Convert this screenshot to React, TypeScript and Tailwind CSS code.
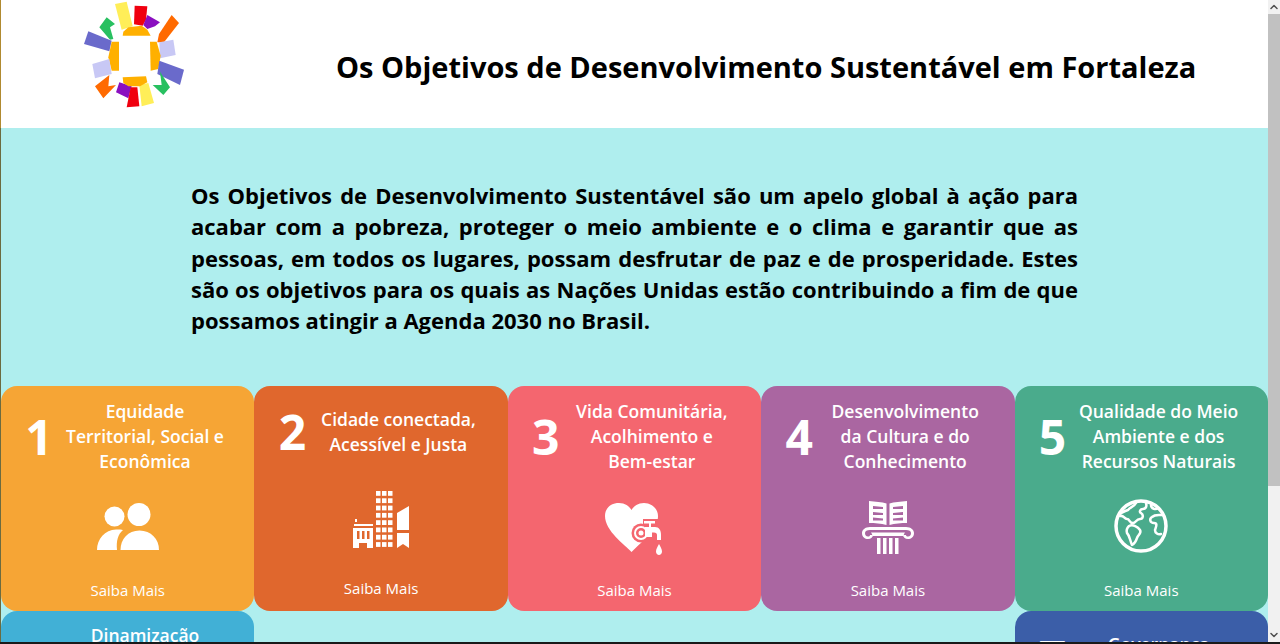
import { ChevronDown, ChevronUp } from 'lucide-react'
import type { ReactNode } from 'react'

function Logo() {
  const shapes: [string, string][] = [
    ['#ffee58', '165,15 200,8 218,82 185,92'],
    ['#f0000f', '224,20 262,22 258,62 248,80 222,76'],
    ['#8a0fc0', '262,48 300,70 285,82 262,90 250,78'],
    ['#ff6a00', '335,48 357,72 312,130 292,130 297,105'],
    ['#28c060', '140,55 165,75 150,85 160,120 150,122 118,85'],
    ['#6a6acb', '85,97 155,125 148,157 72,135'],
    ['#c8c8f5', '298,130 340,122 347,168 300,178'],
    ['#ffb000', '188,110 190,98 205,85 245,80 262,92 272,110'],
    ['#ffb000', '155,128 177,128 177,215 155,215 145,175'],
    ['#ffb000', '270,128 290,128 302,170 295,210 272,215'],
    ['#6a6acb', '298,185 372,212 360,258 292,225'],
    ['#c8c8f5', '97,195 148,180 155,225 105,238'],
    ['#ff6a00', '105,262 148,228 145,262 168,258 130,298'],
    ['#28c060', '300,218 330,265 310,288 278,258 305,258'],
    ['#ffee58', '238,258 265,252 282,312 245,322'],
    ['#8a0fc0', '178,250 215,262 205,298 168,280'],
    ['#f0000f', '212,265 232,265 238,322 200,325'],
    ['#ffb000', '188,235 258,232 262,250 240,262 205,262 190,252'],
  ]
  return (
    <svg viewBox="0 0 450 390" className="w-[150px] h-[130px] shrink-0">
      {shapes.map(([fill, points], i) => (
        <polygon key={i} fill={fill} points={points} />
      ))}
    </svg>
  )
}

function PeopleIcon() {
  return (
    <svg viewBox="0 0 62 47" className="w-[62px] h-[47px]" fill="white">
      <circle cx="17.5" cy="13.5" r="10" />
      <circle cx="42" cy="11.5" r="11.5" />
      <path d="M0 47C0 36 8 27 19 26.500C24 26.300 26 27 26 27C21 31 19 38 20 47Z" />
      <path d="M23.500 47C23.500 36 31 27.500 42.500 27.500C54 27.500 62 36 62 47Z" />
    </svg>
  )
}

function CityIcon() {
  const grid = []
  for (let row = 0; row < 8; row++) {
    for (let col = 0; col < 3; col++) {
      grid.push(<rect key={`${row}-${col}`} x={23 + col * 6} y={row * 7.300} width="4.500" height="4.800" />)
    }
  }
  return (
    <svg viewBox="0 0 57 57" className="w-[57px] h-[57px]" fill="white">
      {grid}
      <rect x="2" y="28" width="2" height="3" />
      <rect x="1" y="33" width="19" height="2" />
      <path fillRule="evenodd" d="M0 37H20V57H14V52H6V57H0ZM4 40V48H6.500V40ZM9 40V48H11.500V40ZM14 40V48H16.500V40Z" />
      <path d="M44 22L56 15V39H44Z" />
      <path d="M44 42H56V57L50 53L44 57Z" />
    </svg>
  )
}

function HeartTapIcon() {
  return (
    <svg viewBox="0 0 58 52" className="w-[58px] h-[52px]" fill="white">
      <path d="M26.500 49C20 42 0 28 0 13C0 5 6 0 14 0C20 0 24 3 26.500 7C29 3 33 0 39 0C47 0 53 6 53 13C53 22 47 30 26.500 49Z" />
      <circle cx="36" cy="30" r="9.500" fill="#f4666f" />
      <rect x="38" y="16" width="18" height="22" fill="#f4666f" />
      <circle cx="36" cy="30" r="6" fill="none" stroke="white" strokeWidth="2" />
      <circle cx="36" cy="30" r="2.500" />
      <path d="M39 18H50V20.500H46V24H50C54 24 56 27 56 32V37H52V32C52 30.500 51 29.500 49 29.500H47V34H40V24H44V20.500H39Z" />
      <path d="M54 41C55.500 44 57 46 57 48.500C57 50.500 55.500 52 54 52C52.500 52 51 50.500 51 48.500C51 46 52.500 44 54 41Z" />
    </svg>
  )
}

function BookColumnIcon() {
  return (
    <svg viewBox="0 0 52 54" className="w-[52px] h-[54px]" fill="white">
      <path fillRule="evenodd" d="M7 1C13 2 20 2 24.500 3.500V25C19 23.500 13 23 7 23ZM11 6V9H21V7ZM11 12V15H21V13ZM11 17.500V20.500H21V18.500Z" />
      <path fillRule="evenodd" d="M27.500 3.500C32 2 39 2 45 1V23C39 23 33 23.500 27.500 25ZM31 7V9H41V6ZM31 13V15H41V12ZM31 18.500V20.500H41V17.500Z" />
      <path fillRule="evenodd" d="M8 27H44C49 27 52 30 52 33C52 37 49 39 46 39C43 39 41 37 41 35H44C44 36 45 36.500 46 36.500C48 36.500 49 35 49 33C49 31 47 30 44 30H8C5 30 3 31 3 33C3 35 4 36.500 6 36.500C7 36.500 8 36 8 35H11C11 37 9 39 6 39C3 39 0 37 0 33C0 30 3 27 8 27Z" />
      <path d="M9 32.500H43C42 34 41.500 35.500 41 36H11C10.500 35.500 10 34 9 32.500Z" />
      <rect x="15" y="38" width="3.500" height="16" />
      <rect x="21" y="38" width="3.500" height="16" />
      <rect x="27" y="38" width="3.500" height="16" />
      <rect x="33" y="38" width="3.500" height="16" />
    </svg>
  )
}

function GlobeIcon() {
  return (
    <svg viewBox="0 0 54 54" className="w-[54px] h-[54px]" fill="none" stroke="white" strokeLinejoin="round" strokeLinecap="round">
      <circle cx="27" cy="27" r="25" strokeWidth="3.500" />
      <g strokeWidth="2.500">
        <path d="M22 4C20 8 16 8 14 11C11 12 8 13 6 15" />
        <path d="M6 17C10 16 10 20 13 20C16 20 15 24 19 24C22 24 22 20 26 20C29 20 30 16 27 14C25 13 26 10 29 10C32 10 33 7 32 4" />
        <path d="M15 27C19 25 24 28 26 31C28 34 24 36 23 39C22 42 20 45 18 46C16 42 16 37 13 34C12 31 13 29 15 27Z" />
        <path d="M49 16C44 16 41 15 38 18C35 20 36 24 40 24C44 24 42 28 41 31C41 34 44 36 47 35" />
        <path d="M37 6C37 10 42 11 44 9" />
      </g>
    </svg>
  )
}

type Goal = {
  num: string
  title: ReactNode
  bg: string
  headPad: string
  iconPad: string
  linkPad: string
  icon: ReactNode
}

const goals: Goal[] = [
  { num: '1', title: <>Equidade<br />Territorial, Social e<br />Econômica</>, bg: 'bg-[#f6a535]', headPad: 'pt-[13px]', iconPad: 'pt-[17px]', linkPad: 'pt-[14px]', icon: <PeopleIcon /> },
  { num: '2', title: <>Cidade conectada,<br />Acessível e Justa</>, bg: 'bg-[#e0672d]', headPad: 'pt-[21px]', iconPad: 'pt-[5px]', linkPad: 'pt-[12px]', icon: <CityIcon /> },
  { num: '3', title: <>Vida Comunitária,<br />Acolhimento e<br />Bem-estar</>, bg: 'bg-[#f4666f]', headPad: 'pt-[13px]', iconPad: 'pt-[17px]', linkPad: 'pt-[14px]', icon: <HeartTapIcon /> },
  { num: '4', title: <>Desenvolvimento<br />da Cultura e do<br />Conhecimento</>, bg: 'bg-[#aa66a1]', headPad: 'pt-[13px]', iconPad: 'pt-[14px]', linkPad: 'pt-[14px]', icon: <BookColumnIcon /> },
  { num: '5', title: <>Qualidade do Meio<br />Ambiente e dos<br />Recursos Naturais</>, bg: 'bg-[#4aab8c]', headPad: 'pt-[13px]', iconPad: 'pt-[13px]', linkPad: 'pt-[14px]', icon: <GlobeIcon /> },
]

function GoalCard({ goal }: { goal: Goal }) {
  return (
    <div className={`h-[225px] rounded-2xl text-white flex flex-col ${goal.bg}`}>
      <div className={`h-[100px] ${goal.headPad}`}>
        <div className="flex items-center">
          <span className="w-[76px] text-center text-[48px] font-bold leading-none -mr-[17px]">{goal.num}</span>
          <h2 className="w-[170px] text-center text-[17.5px] leading-[25px] font-semibold">{goal.title}</h2>
        </div>
      </div>
      <div className={`h-[80px] flex justify-center items-start ${goal.iconPad}`}>{goal.icon}</div>
      <div className={`h-[45px] text-center text-[15px] leading-5 ${goal.linkPad}`}>Saiba Mais</div>
    </div>
  )
}

export default function App() {
  return (
    <div className="h-[644px] overflow-hidden flex border-b-2 border-[#1a1a1a] font-['Open_Sans','Noto_Sans',sans-serif]">
      <main className="flex-1 min-w-0 bg-[#afeeee]">
        <header className="h-[128px] bg-white flex items-center pl-[59px] border-l border-[#b08a30]">
          <Logo />
          <h1 className="ml-[126px] pt-[6px] text-[29px] font-bold text-black whitespace-nowrap">
            Os Objetivos de Desenvolvimento Sustentável em Fortaleza
          </h1>
        </header>

        <section className="h-[258px] pt-[52px] pl-[190px] pr-[190px] border-l border-[#6b6b40]">
          <p className="text-[22px] leading-[31.25px] font-bold text-black text-justify">
            Os Objetivos de Desenvolvimento Sustentável são um apelo global à ação para acabar com a pobreza, proteger o meio ambiente e o clima e garantir que as pessoas, em todos os lugares, possam desfrutar de paz e de prosperidade. Estes são os objetivos para os quais as Nações Unidas estão contribuindo a fim de que possamos atingir a Agenda 2030 no Brasil.
          </p>
        </section>

        <section className="grid grid-cols-5 border-l border-[#6b6b40]">
          {goals.map(goal => (
            <GoalCard key={goal.num} goal={goal} />
          ))}
          <div className="h-[225px] rounded-2xl bg-[#41b0d6] text-white pt-[12px] pl-[59px]">
            <h2 className="w-[170px] text-center text-[17.5px] leading-[25px] font-semibold">Dinamização</h2>
          </div>
          <div className="col-start-5 h-[225px] rounded-2xl bg-[#3b5ea8] text-white flex items-start pt-[21px]">
            <span className="w-[76px] mt-[2px] text-center text-[48px] font-bold leading-none -mr-[17px]">7</span>
            <h2 className="w-[170px] text-center text-[17.5px] leading-[25px] font-semibold">Governança</h2>
          </div>
        </section>
      </main>

      <aside className="w-3 shrink-0 bg-[#f1f1f1] flex flex-col text-[#505050]">
        <ChevronUp className="w-3 h-[14px] shrink-0" strokeWidth={3} />
        <div className="h-[472px] bg-[#c1c1c1]" />
        <div className="flex-1" />
        <ChevronDown className="w-3 h-[14px] shrink-0" strokeWidth={3} />
      </aside>
    </div>
  )
}
